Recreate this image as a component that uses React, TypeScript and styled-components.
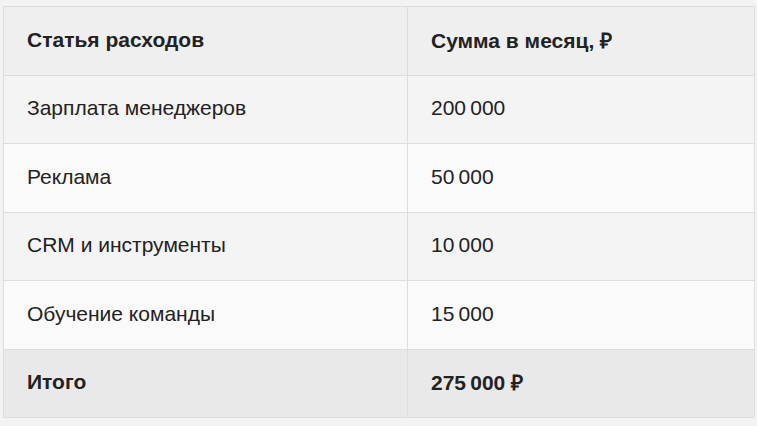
import styled, { createGlobalStyle } from 'styled-components'

const GlobalStyle = createGlobalStyle`
  html, body {
    margin: 0;
    padding: 0;
    background: #f3f3f3;
  }
  body {
    font-family: 'Liberation Sans', Arial, sans-serif;
    color: #222;
  }
`

type Row = { name: string; amount: string }

const rows: Row[] = [
  { name: 'Зарплата менеджеров', amount: '200\u202F000' },
  { name: 'Реклама', amount: '50\u202F000' },
  { name: 'CRM и инструменты', amount: '10\u202F000' },
  { name: 'Обучение команды', amount: '15\u202F000' },
]

const App = () => {
  return (
    <Page>
      <GlobalStyle />
      <Table>
        <colgroup>
          <col style={{ width: 404 }} />
          <col />
        </colgroup>
        <thead>
          <HeadRow>
            <HeadCell>Статья расходов</HeadCell>
            <HeadCell>Сумма в месяц, ₽</HeadCell>
          </HeadRow>
        </thead>
        <tbody>
          {rows.map((row, idx) => (
            <BodyRow key={row.name} $odd={idx % 2 === 0}>
              <Cell>{row.name}</Cell>
              <Cell>{row.amount}</Cell>
            </BodyRow>
          ))}
          <TotalRow>
            <TotalCell>Итого</TotalCell>
            <TotalCell>{'275\u202F000 ₽'}</TotalCell>
          </TotalRow>
        </tbody>
      </Table>
    </Page>
  )
}

export default App

const Page = styled.div`
  padding: 6px 3px 9px 3px;
`

const Table = styled.table`
  width: 752px;
  border-collapse: collapse;
  table-layout: fixed;
  font-size: 21px;
`

const HeadRow = styled.tr`
  background: #efefef;
`

const BodyRow = styled.tr<{ $odd: boolean }>`
  background: ${(p) => (p.$odd ? '#f4f4f4' : '#fafafa')};
`

const TotalRow = styled.tr`
  background: #e9e9e9;
`

const Cell = styled.td`
  height: 68.5px;
  box-sizing: border-box;
  padding: 0 23px 2px 23px;
  border: 1px solid #dddddd;
  text-align: left;
  vertical-align: middle;
  color: #222;
`

const HeadCell = styled.th`
  height: 68.5px;
  box-sizing: border-box;
  padding: 0 23px 2px 23px;
  border: 1px solid #dddddd;
  text-align: left;
  vertical-align: middle;
  font-weight: 700;
  color: #222;
`

const TotalCell = styled(Cell)`
  font-weight: 700;
`
